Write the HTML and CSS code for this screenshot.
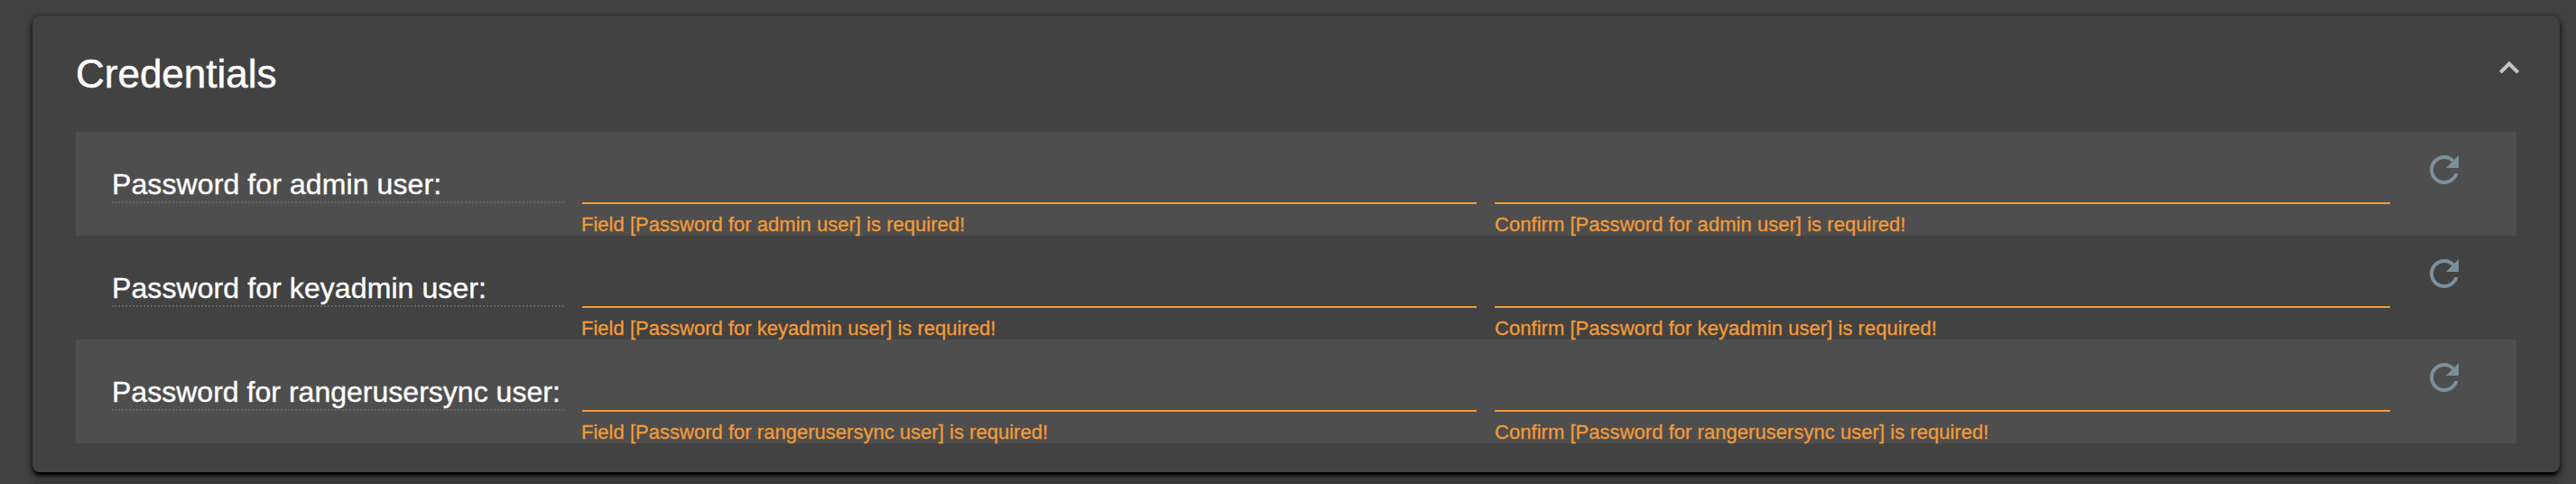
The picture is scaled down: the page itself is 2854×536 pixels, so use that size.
FILE: index.html
```html
<!DOCTYPE html>
<html lang="en">
<head>
<meta charset="utf-8">
<title>Credentials</title>
<link rel="stylesheet" href="styles.css">
</head>
<body>
<main class="page">
  <section class="card">
    <header class="card-header">
      <h2 class="card-title">Credentials</h2>
      <svg class="chevron" viewBox="0 0 24 16"><path d="M2.4 14.2 12 4.6l9.6 9.6"/></svg>
    </header>
    <div class="rows">
      <div class="row admin">
        <label class="label">Password for admin user:</label>
        <div class="field"><div class="input"></div><p class="error">Field [Password for admin user] is required!</p></div>
        <div class="field"><div class="input"></div><p class="error confirm">Confirm [Password for admin user] is required!</p></div>
        <svg class="refresh" viewBox="0 0 24 24"><path d="M17.65 6.35C16.2 4.9 14.21 4 12 4c-4.42 0-7.99 3.58-7.99 8s3.57 8 7.99 8c3.73 0 6.84-2.55 7.73-6h-2.08c-.82 2.33-3.04 4-5.65 4-3.31 0-6-2.69-6-6s2.69-6 6-6c1.66 0 3.14.69 4.22 1.78L13 11h7V4l-2.35 2.35z"/></svg>
      </div>
      <div class="row keyadmin">
        <label class="label">Password for keyadmin user:</label>
        <div class="field"><div class="input"></div><p class="error">Field [Password for keyadmin user] is required!</p></div>
        <div class="field"><div class="input"></div><p class="error confirm">Confirm [Password for keyadmin user] is required!</p></div>
        <svg class="refresh" viewBox="0 0 24 24"><path d="M17.65 6.35C16.2 4.9 14.21 4 12 4c-4.42 0-7.99 3.58-7.99 8s3.57 8 7.99 8c3.73 0 6.84-2.55 7.73-6h-2.08c-.82 2.33-3.04 4-5.65 4-3.31 0-6-2.69-6-6s2.69-6 6-6c1.66 0 3.14.69 4.22 1.78L13 11h7V4l-2.35 2.35z"/></svg>
      </div>
      <div class="row usersync">
        <label class="label">Password for rangerusersync user:</label>
        <div class="field"><div class="input"></div><p class="error">Field [Password for rangerusersync user] is required!</p></div>
        <div class="field"><div class="input"></div><p class="error confirm">Confirm [Password for rangerusersync user] is required!</p></div>
        <svg class="refresh" viewBox="0 0 24 24"><path d="M17.65 6.35C16.2 4.9 14.21 4 12 4c-4.42 0-7.99 3.58-7.99 8s3.57 8 7.99 8c3.73 0 6.84-2.55 7.73-6h-2.08c-.82 2.33-3.04 4-5.65 4-3.31 0-6-2.69-6-6s2.69-6 6-6c1.66 0 3.14.69 4.22 1.78L13 11h7V4l-2.35 2.35z"/></svg>
      </div>
    </div>
  </section>
  <section class="card card-next"></section>
</main>
</body>
</html>
```
FILE: styles.css
```css
* { box-sizing: border-box; }
html { background: #424242; }
body {
  margin: 0;
  font-family: "Liberation Sans", Arial, sans-serif;
  color: #fff;
}
.page {
  display: flex;
  flex-direction: column;
  gap: 12px;
  height: 536px;
  padding: 18px 18px 0 36px;
  overflow: hidden;
  background: #424242;
}
.card {
  flex: none;
  height: 505px;
  padding: 0 48px;
  border-radius: 8px;
  background: #424242;
  box-shadow: 0 6px 2px -4px #000, 0 4px 4px 0 rgba(0, 0, 0, .7), 0 2px 10px 0 rgba(0, 0, 0, .6);
}
.card-header {
  display: flex;
  justify-content: space-between;
  height: 128px;
  padding-top: 38px;
}
.card-title {
  margin: 1px 0 0;
  font-size: 44px;
  line-height: 50px;
  font-weight: 400;
  -webkit-text-stroke: .5px #fff;
}
.chevron {
  width: 24px;
  height: 16px;
  margin: 10px -4px 0 0;
  fill: none;
  stroke: #c6c6c6;
  stroke-width: 4;
}
.row {
  display: grid;
  grid-template-columns: 501px 991px 992px 48px;
  column-gap: 20px;
  align-items: start;
  height: 115px;
  padding-left: 40px;
}
.row:nth-child(odd) { background: #4e4e4e; }
.label {
  height: 79px;
  padding-top: 40px;
  border-bottom: 2px dotted #666;
  font-size: 32px;
  line-height: 36px;
  white-space: nowrap;
  -webkit-text-stroke: .4px #fff;
}
.input {
  height: 80px;
  border-bottom: 2px solid #f29b38;
}
.error {
  margin: 0 0 0 -1px;
  padding-top: 10px;
  color: #f29b38;
  font-size: 22px;
  line-height: 25px;
  letter-spacing: .02px;
  -webkit-text-stroke: .3px #f29b38;
}
.error.confirm {
  margin-left: 0;
  letter-spacing: .04px;
}
.refresh {
  width: 48px;
  height: 48px;
  margin: 18px 0 0 16px;
  fill: #7b909c;
}
.admin .label { letter-spacing: .1px; }
.keyadmin .label { letter-spacing: .09px; }
.usersync .label { letter-spacing: .02px; }
```
